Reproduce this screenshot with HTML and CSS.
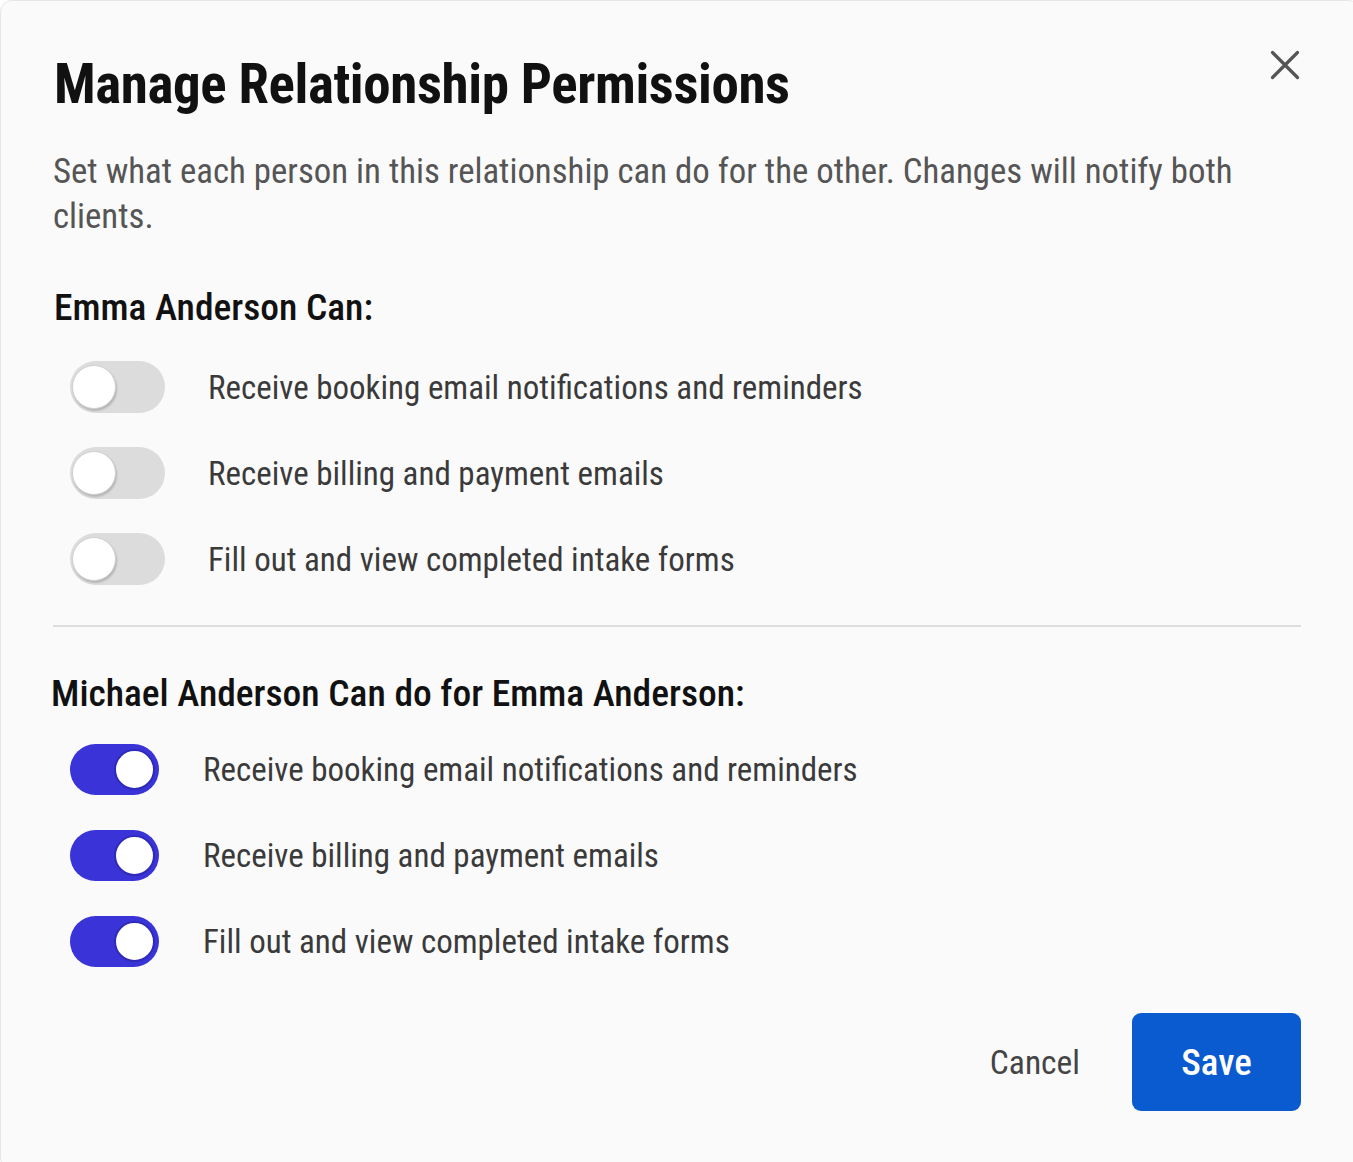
FILE: index.html
```html
<!DOCTYPE html>
<html>
<head>
<meta charset="utf-8">
<title>Manage Relationship Permissions</title>
<link rel="stylesheet" href="styles.css">
</head>
<body>
<div class="modal">
  <div class="header">
    <h1 class="title">Manage Relationship Permissions</h1>
    <button class="close" aria-label="Close">
      <svg width="30" height="30" viewBox="0 0 30 30"><path d="M2.5 2.5L27.5 27.5M27.5 2.5L2.5 27.5" stroke="#555" stroke-width="3.2" stroke-linecap="round"/></svg>
    </button>
  </div>
  <p class="desc">Set what each person in this relationship can do for the other. Changes will notify both clients.</p>

  <section class="group first">
    <h2 class="group-title">Emma Anderson Can:</h2>
    <ul class="rows off-rows">
      <li class="row"><span class="toggle off"><span class="knob"></span></span><span class="label">Receive booking email notifications and reminders</span></li>
      <li class="row"><span class="toggle off"><span class="knob"></span></span><span class="label">Receive billing and payment emails</span></li>
      <li class="row"><span class="toggle off"><span class="knob"></span></span><span class="label">Fill out and view completed intake forms</span></li>
    </ul>
  </section>

  <hr class="divider">

  <section class="group second">
    <h2 class="group-title">Michael Anderson Can do for Emma Anderson:</h2>
    <ul class="rows on-rows">
      <li class="row"><span class="toggle on"><span class="knob"></span></span><span class="label">Receive booking email notifications and reminders</span></li>
      <li class="row"><span class="toggle on"><span class="knob"></span></span><span class="label">Receive billing and payment emails</span></li>
      <li class="row"><span class="toggle on"><span class="knob"></span></span><span class="label">Fill out and view completed intake forms</span></li>
    </ul>
  </section>

  <div class="footer">
    <button class="cancel">Cancel</button>
    <button class="save">Save</button>
  </div>
</div>
</body>
</html>
```
FILE: styles.css
```css
* { box-sizing: border-box; }
html, body { margin: 0; padding: 0; background: #ffffff; }
body {
  font-family: Roboto, "Liberation Sans", sans-serif;
  font-stretch: 75%;
}

.modal {
  width: 1360px;
  height: 1170px;
  background: #fafafa;
  border: 1px solid #e6e6e6;
  border-radius: 12px;
  padding: 50px 52px 0 52px;
}

.header {
  display: flex;
  justify-content: space-between;
  align-items: flex-start;
  width: 1255px;
}
.title {
  margin: 0;
  padding-left: 1px;
  font-size: 55px;
  line-height: 67px;
  font-weight: 700;
  letter-spacing: -0.4px;
  color: #111;
}
.close {
  margin: -1px 8px 0 0;
  padding: 0;
  border: 0;
  background: none;
  width: 30px;
  height: 30px;
}
.close svg { display: block; }

.desc {
  margin: 31px 0 0 0;
  width: 1248px;
  font-size: 34.8px;
  line-height: 45px;
  color: #555;
}

.group-title {
  margin: 0;
  font-size: 37.5px;
  line-height: 42px;
  font-weight: 500;
  color: #111;
}
.first { margin-top: 47px; }
.first .group-title { padding-left: 1px; }
.second { margin-top: 45px; }
.second .group-title { margin-left: -2px; }

.rows {
  list-style: none;
  margin: 0;
  padding: 0;
  display: flex;
  flex-direction: column;
}
.off-rows { margin-top: 33px; gap: 34px; padding-left: 17px; }
.on-rows { margin-top: 29px; gap: 34px; padding-left: 17px; }

.row {
  display: flex;
  align-items: center;
  height: 52px;
}
.label {
  font-size: 33px;
  color: #3a3a3a;
}
.toggle {
  position: relative;
  flex: none;
  border-radius: 26px;
}
.toggle.off {
  width: 95px;
  height: 52px;
  background: #dcdcdc;
  margin-right: 43px;
}
.toggle.on {
  width: 89px;
  height: 51px;
  background: #3a33d8;
  margin-right: 44px;
}
.knob {
  position: absolute;
  border-radius: 50%;
  background: #fff;
}
.off .knob {
  left: 2px;
  top: 4px;
  width: 44px;
  height: 44px;
  border: 1px solid #d0d0d0;
  box-shadow: 1px 2px 2px rgba(0,0,0,0.18);
}
.on .knob {
  right: 4px;
  top: 5px;
  width: 41px;
  height: 41px;
  border: 2px solid #2f2ab8;
}

.divider {
  margin: 40px 0 0 0;
  width: 1248px;
  border: 0;
  height: 2px;
  background: #dedede;
}

.footer {
  display: flex;
  justify-content: flex-end;
  align-items: center;
  gap: 52px;
  margin-top: 46px;
  width: 1248px;
}
.cancel {
  border: 0;
  background: none;
  padding: 0;
  font-family: Roboto, "Liberation Sans", sans-serif;
  font-stretch: 75%;
  font-size: 33.5px;
  color: #444;
}
.save {
  width: 169px;
  height: 98px;
  border: 0;
  border-radius: 9px;
  background: #0a5ad0;
  color: #fff;
  font-family: Roboto, "Liberation Sans", sans-serif;
  font-stretch: 75%;
  font-size: 37px;
  font-weight: 500;
}
```
